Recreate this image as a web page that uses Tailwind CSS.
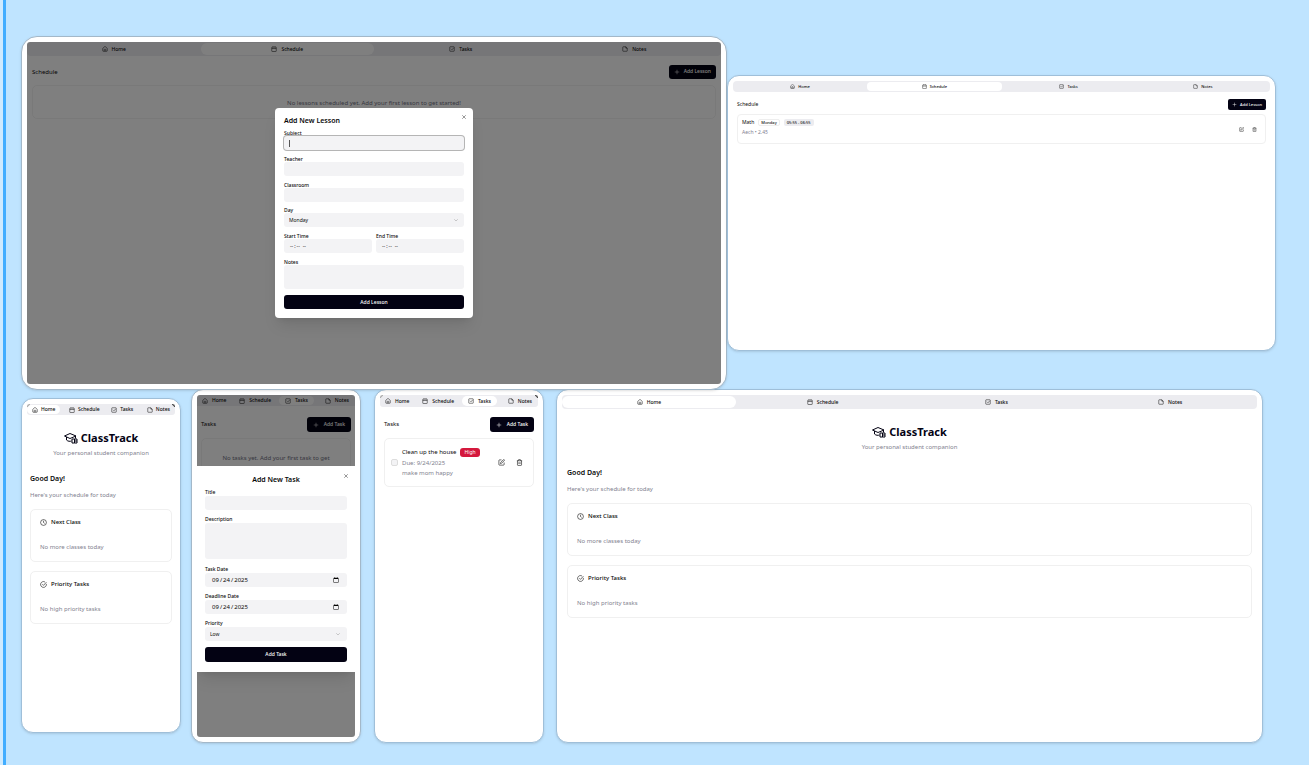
<!DOCTYPE html>
<html lang="en">
<head>
<meta charset="utf-8">
<meta name="viewport" content="width=device-width, initial-scale=1">
<title>ClassTrack</title>
<script src="https://cdn.jsdelivr.net/npm/@tailwindcss/browser@4"></script>
</head>
<body class="min-h-screen bg-[#bfe4ff] font-['Noto_Sans',sans-serif] text-[#0a0a0a]">
<svg class="hidden" aria-hidden="true">
  <symbol id="home" viewBox="0 0 24 24"><path d="M15 21v-7a1 1 0 0 0-1-1h-4a1 1 0 0 0-1 1v7"/><path d="M3 10a2 2 0 0 1 .7-1.5l7-6a2 2 0 0 1 2.6 0l7 6A2 2 0 0 1 21 10v9a2 2 0 0 1-2 2H5a2 2 0 0 1-2-2z"/></symbol>
  <symbol id="cal" viewBox="0 0 24 24"><path d="M8 2v4M16 2v4M3 10h18"/><rect x="3" y="4" width="18" height="18" rx="2"/></symbol>
  <symbol id="check" viewBox="0 0 24 24"><rect x="3" y="3" width="18" height="18" rx="2"/><path d="m8 11 4 4 7-8"/></symbol>
  <symbol id="note" viewBox="0 0 24 24"><path d="M15 3H5a2 2 0 0 0-2 2v14a2 2 0 0 0 2 2h14a2 2 0 0 0 2-2V9z"/><path d="M15 3v5a1 1 0 0 0 1 1h5"/></symbol>
  <symbol id="plus" viewBox="0 0 24 24"><path d="M3 12h18M12 3v18"/></symbol>
  <symbol id="x" viewBox="0 0 24 24"><path d="M19 5 5 19M5 5l14 14"/></symbol>
  <symbol id="down" viewBox="0 0 24 24"><path d="m5 9 7 7 7-7"/></symbol>
  <symbol id="edit" viewBox="0 0 24 24"><path d="M12 3H5a2 2 0 0 0-2 2v14a2 2 0 0 0 2 2h14a2 2 0 0 0 2-2v-7"/><path d="M18.4 2.6a1 1 0 0 1 3 3l-9 9-4 1 1-4z"/></symbol>
  <symbol id="trash" viewBox="0 0 24 24"><path d="M3 6h18M19 6v14a2 2 0 0 1-2 2H7a2 2 0 0 1-2-2V6M8 6V4a2 2 0 0 1 2-2h4a2 2 0 0 1 2 2v2M10 11v6M14 11v6"/></symbol>
  <symbol id="clock" viewBox="0 0 24 24"><circle cx="12" cy="12" r="10"/><path d="M12 6v6l4 3"/></symbol>
  <symbol id="done" viewBox="0 0 24 24"><path d="M21.8 10A10 10 0 1 1 17 3.3"/><path d="m8 11 4 4L22 4"/></symbol>
  <symbol id="logo" viewBox="0 0 28 24"><path d="M1 8 12 3l12 5-12 5z"/><path d="M5 10v6c3 3 7 3 10 2M23 8v5"/><path d="M16 14h5v8h-5zM21 14h5v8h-5M21 18h5"/></symbol>
</svg>

<main class="flex min-h-screen flex-col border-l-3 border-[#cfeafe]">
<div class="flex-1 border-l-3 border-[#42adff] pt-9 pl-[15px]">

<div class="relative z-10 flex items-start pr-[33px]">

<!-- Schedule: new lesson dialog -->
<section class="min-w-0 flex-[694] basis-0 rounded-2xl border border-[#a3b8c9] bg-white p-[5px] shadow-sm">
  <div class="relative min-h-[342px] overflow-hidden rounded-[3px] bg-white">
    <nav class="grid grid-cols-4 rounded-[4px] bg-[#ececf0] text-[5px] leading-[10px] font-medium">
      <button class="my-px flex items-center justify-center gap-1 rounded-md py-px"><svg class="size-[6px] fill-none stroke-current stroke-2"><use href="#home"/></svg>Home</button>
      <button class="my-px flex items-center justify-center gap-1 rounded-md bg-white py-px"><svg class="size-[6px] fill-none stroke-current stroke-2"><use href="#cal"/></svg>Schedule</button>
      <button class="my-px flex items-center justify-center gap-1 rounded-md py-px"><svg class="size-[6px] fill-none stroke-current stroke-2"><use href="#check"/></svg>Tasks</button>
      <button class="my-px flex items-center justify-center gap-1 rounded-md py-px"><svg class="size-[6px] fill-none stroke-current stroke-2"><use href="#note"/></svg>Notes</button>
    </nav>
    <div class="px-[5px] pt-[9px]">
      <div class="flex items-center justify-between">
        <h2 class="text-[6px] leading-[14px]">Schedule</h2>
        <button class="flex h-[14px] items-center gap-1 rounded-[3px] bg-[#030213] px-[5px] text-[5px] font-medium text-white"><svg class="size-[6px] fill-none stroke-current stroke-2"><use href="#plus"/></svg>Add Lesson</button>
      </div>
      <p class="mt-[6px] rounded-[5px] border border-black/5 py-[11px] pt-[13px] text-center text-[6px] leading-[8px] text-[#717182]">No lessons scheduled yet. Add your first lesson to get started!</p>
    </div>
    <div class="absolute inset-0 flex justify-center bg-black/50 pt-[66px]">
      <div role="dialog" aria-labelledby="lesson-title" class="relative mb-auto w-[198px] rounded-[4px] bg-white px-[9px] pt-[9px] pb-[9px] shadow-lg">
        <button aria-label="Close" class="absolute top-[6px] right-[6px]"><svg class="size-[6px] fill-none stroke-[#333] stroke-2"><use href="#x"/></svg></button>
        <h2 id="lesson-title" class="text-[7px] leading-[8px] font-semibold">Add New Lesson</h2>
        <form class="mt-[5px] flex min-h-[179px] flex-col justify-between text-[5px] leading-[6px] font-medium">
          <div class="relative flex flex-col"><label for="subject">Subject</label><input id="subject" class="h-[14px] rounded-[3px] bg-[#f3f3f5] px-[5px] font-normal ring-1 ring-[#b5b5b5] outline-none"><span class="absolute bottom-[3px] left-[5px] h-[7px] w-px bg-[#555]"></span></div>
          <div class="flex flex-col"><label for="teacher">Teacher</label><input id="teacher" class="h-[14px] rounded-[3px] bg-[#f3f3f5] px-[5px] font-normal"></div>
          <div class="flex flex-col"><label for="room">Classroom</label><input id="room" class="h-[14px] rounded-[3px] bg-[#f3f3f5] px-[5px] font-normal"></div>
          <div class="relative flex flex-col"><label for="day">Day</label><select id="day" class="h-[14px] appearance-none rounded-[3px] bg-[#f3f3f5] px-[5px] font-normal"><option>Monday</option></select><svg class="pointer-events-none absolute right-[5px] bottom-[4px] size-[6px] fill-none stroke-[#999] stroke-2"><use href="#down"/></svg></div>
          <div class="grid grid-cols-2 gap-[4px]">
            <div class="flex flex-col"><label for="start">Start Time</label><input id="start" type="time" class="h-[14px] rounded-[3px] bg-[#f3f3f5] px-[5px] font-normal [&::-webkit-calendar-picker-indicator]:hidden"></div>
            <div class="flex flex-col"><label for="end">End Time</label><input id="end" type="time" class="h-[14px] rounded-[3px] bg-[#f3f3f5] px-[5px] font-normal [&::-webkit-calendar-picker-indicator]:hidden"></div>
          </div>
          <div class="flex flex-col"><label for="lnotes">Notes</label><textarea id="lnotes" class="h-[24px] resize-none rounded-[3px] bg-[#f3f3f5] px-[5px] font-normal"></textarea></div>
          <button type="button" class="h-[14px] rounded-[3px] bg-[#030213] text-white">Add Lesson</button>
        </form>
      </div>
    </div>
  </div>
</section>

<!-- Schedule: lesson list -->
<section class="mt-[39px] min-h-[276px] min-w-0 flex-[537] basis-0 rounded-xl border border-[#9fbfd9] bg-white p-[5px] shadow-sm">
  <nav class="grid grid-cols-4 rounded-[4px] bg-[#ececf0] text-[4px] leading-[9px] font-medium">
    <button class="my-px flex items-center justify-center gap-[3px] rounded-[4px]"><svg class="size-[5px] fill-none stroke-current stroke-2"><use href="#home"/></svg>Home</button>
    <button class="my-px flex items-center justify-center gap-[3px] rounded-[4px] bg-white"><svg class="size-[5px] fill-none stroke-current stroke-2"><use href="#cal"/></svg>Schedule</button>
    <button class="my-px flex items-center justify-center gap-[3px] rounded-[4px]"><svg class="size-[5px] fill-none stroke-current stroke-2"><use href="#check"/></svg>Tasks</button>
    <button class="my-px flex items-center justify-center gap-[3px] rounded-[4px]"><svg class="size-[5px] fill-none stroke-current stroke-2"><use href="#note"/></svg>Notes</button>
  </nav>
  <div class="px-1 pt-[7px]">
    <div class="flex items-center justify-between">
      <h2 class="text-[5px] leading-[11px]">Schedule</h2>
      <button class="flex h-[11px] items-center gap-[3px] rounded-[2px] bg-[#030213] px-[4px] text-[4px] font-medium text-white"><svg class="size-[5px] fill-none stroke-current stroke-2"><use href="#plus"/></svg>Add Lesson</button>
    </div>
    <article class="mt-1 flex items-center justify-between rounded-[4px] border border-[#f0f0f0] py-[4px] pr-[8px] pl-[4px]">
      <div>
        <div class="flex items-center gap-[4px] text-[4px] leading-[7px] font-medium"><h3 class="text-[5px] font-normal">Math</h3><span class="rounded-[2px] border border-[#eee] px-[2px] leading-[5px]">Monday</span><span class="rounded-[2px] bg-[#ececf0] px-[3px]">05:55 - 06:55</span></div>
        <p class="mt-[3px] mb-[3px] text-[5px] leading-[7px] text-[#82828f]">Aech • 2.45</p>
      </div>
      <div class="flex gap-[8px]">
        <button aria-label="Edit lesson"><svg class="size-[5px] fill-none stroke-current stroke-2"><use href="#edit"/></svg></button>
        <button aria-label="Delete lesson"><svg class="size-[5px] fill-none stroke-current stroke-2"><use href="#trash"/></svg></button>
      </div>
    </article>
  </div>
</section>
</div>

<div class="-mt-px flex items-start pr-[46px]">

<!-- Home, narrow -->
<section class="mt-[9px] min-h-[335px] min-w-0 flex-[148] basis-0 rounded-xl border border-[#9fbfd9] bg-white p-[5px] shadow-sm">
  <nav class="relative flex justify-between rounded-[3px] bg-[#ececf0] text-[5px] leading-[9px] font-medium">
    <button class="my-px flex items-center gap-[3px] rounded-[5px] bg-white px-[5px]"><svg class="size-[6px] fill-none stroke-current stroke-2"><use href="#home"/></svg>Home</button>
    <button class="my-px flex items-center gap-[3px] px-[3px]"><svg class="size-[6px] fill-none stroke-current stroke-2"><use href="#cal"/></svg>Schedule</button>
    <button class="my-px flex items-center gap-[3px] px-[3px]"><svg class="size-[6px] fill-none stroke-current stroke-2"><use href="#check"/></svg>Tasks</button>
    <button class="my-px flex items-center gap-[3px] px-[5px]"><svg class="size-[6px] fill-none stroke-current stroke-2"><use href="#note"/></svg>Notes</button>
    <span class="absolute top-0 right-0 size-[3px] rounded-tr-[3px] border-t border-r border-[#444]"></span>
    <span class="absolute top-0 left-0 size-[3px] rounded-tl-[3px] border-t border-l border-[#aaa]"></span>
  </nav>
  <div class="px-[3px] pt-[15px]">
    <h1 class="flex items-center justify-center gap-[3px] text-[11px] leading-[16px] font-bold text-[#030213]"><svg class="h-[12px] w-[14px] fill-none stroke-current stroke-2"><use href="#logo"/></svg>ClassTrack</h1>
    <p class="mt-[3px] text-center text-[6px] leading-[8px] text-[#82828f]">Your personal student companion</p>
    <h2 class="mt-[17px] text-[7px] leading-[10px] font-semibold">Good Day!</h2>
    <p class="mt-[7px] text-[6px] leading-[8px] text-[#82828f]">Here's your schedule for today</p>
    <article class="mt-[10px] rounded-[5px] border border-[#f0f0f0] px-[9px] py-[8px]"><h3 class="flex items-center gap-[4px] text-[6px] leading-[8px] font-medium"><svg class="size-[7px] fill-none stroke-current stroke-2"><use href="#clock"/></svg>Next Class</h3><p class="mt-[17px] mb-[2px] text-[6px] leading-[8px] text-[#82828f]">No more classes today</p></article>
    <article class="mt-[9px] rounded-[5px] border border-[#f0f0f0] px-[9px] py-[8px]"><h3 class="flex items-center gap-[4px] text-[6px] leading-[8px] font-medium"><svg class="size-[7px] fill-none stroke-current stroke-2"><use href="#done"/></svg>Priority Tasks</h3><p class="mt-[17px] mb-[2px] text-[6px] leading-[8px] text-[#82828f]">No high priority tasks</p></article>
  </div>
</section>

<!-- Tasks: new task dialog -->
<section class="ml-[10px] min-w-0 flex-[158] basis-0 rounded-xl border border-[#a3b8c9] bg-white p-[5px] shadow-sm">
  <div class="relative min-h-[342px] overflow-hidden rounded-[3px] bg-white">
    <nav class="flex justify-between bg-[#ececf0] text-[5px] leading-[9px] font-medium">
      <button class="my-px flex items-center gap-[4px] px-[5px]"><svg class="size-[6px] fill-none stroke-current stroke-2"><use href="#home"/></svg>Home</button>
      <button class="my-px flex items-center gap-[4px] px-[3px]"><svg class="size-[6px] fill-none stroke-current stroke-2"><use href="#cal"/></svg>Schedule</button>
      <button class="my-px flex items-center gap-[4px] rounded-[5px] bg-white px-[6px]"><svg class="size-[6px] fill-none stroke-current stroke-2"><use href="#check"/></svg>Tasks</button>
      <button class="my-px flex items-center gap-[4px] px-[6px]"><svg class="size-[6px] fill-none stroke-current stroke-2"><use href="#note"/></svg>Notes</button>
    </nav>
    <div class="px-[4px] pt-[11px]">
      <div class="flex items-center justify-between"><h2 class="text-[6px] leading-[15px]">Tasks</h2><button class="flex h-[15px] items-center gap-[5px] rounded-[3px] bg-[#030213] px-[6px] text-[5px] font-medium text-white"><svg class="size-[6px] fill-none stroke-current stroke-2"><use href="#plus"/></svg>Add Task</button></div>
      <p class="mt-[6px] rounded-[5px] border border-black/5 px-4 pt-[14px] pb-4 text-center text-[6px] leading-[10px] text-[#717182]">No tasks yet. Add your first task to get started!</p>
    </div>
    <div class="absolute inset-0 flex items-start bg-black/50 pt-[71px]">
      <div role="dialog" aria-labelledby="task-title" class="relative w-full bg-white px-[8px] pt-[9px] pb-[10px] shadow-lg">
        <button aria-label="Close" class="absolute top-[7px] right-[6px]"><svg class="size-[6px] fill-none stroke-[#333] stroke-2"><use href="#x"/></svg></button>
        <h2 id="task-title" class="text-center text-[7px] leading-[9px] font-semibold">Add New Task</h2>
        <form class="mt-[5px] flex flex-col gap-[6px] text-[5px] leading-[7px] font-medium">
          <div class="flex flex-col"><label for="title">Title</label><input id="title" class="h-[14px] rounded-[3px] bg-[#f3f3f5] px-[6px] font-normal"></div>
          <div class="mb-px flex flex-col"><label for="desc">Description</label><textarea id="desc" class="h-[36px] resize-none rounded-[3px] bg-[#f3f3f5] px-[6px] font-normal"></textarea></div>
          <div class="flex flex-col"><label for="tdate">Task Date</label><input id="tdate" type="date" value="2025-09-24" class="h-[14px] rounded-[3px] bg-[#f3f3f5] px-[6px] text-[6px] font-normal"></div>
          <div class="flex flex-col"><label for="ddate">Deadline Date</label><input id="ddate" type="date" value="2025-09-24" class="h-[14px] rounded-[3px] bg-[#f3f3f5] px-[6px] text-[6px] font-normal"></div>
          <div class="relative flex flex-col"><label for="prio">Priority</label><select id="prio" class="h-[14px] appearance-none rounded-[3px] bg-[#f3f3f5] px-[5px] font-normal"><option>Low</option></select><svg class="pointer-events-none absolute right-[6px] bottom-[4px] size-[6px] fill-none stroke-[#999] stroke-2"><use href="#down"/></svg></div>
          <button type="button" class="h-[15px] rounded-[3px] bg-[#030213] text-[5px] text-white">Add Task</button>
        </form>
      </div>
    </div>
  </div>
</section>

<!-- Tasks: list -->
<section class="ml-[13px] min-h-[354px] min-w-0 flex-[158] basis-0 rounded-xl border border-[#9fbfd9] bg-white p-[5px] shadow-sm">
  <nav class="relative flex justify-between rounded-[3px] bg-[#ececf0] text-[5px] leading-[10px] font-medium">
    <button class="my-px flex items-center gap-[4px] px-[5px]"><svg class="size-[6px] fill-none stroke-current stroke-2"><use href="#home"/></svg>Home</button>
    <button class="my-px flex items-center gap-[4px] px-[3px]"><svg class="size-[6px] fill-none stroke-current stroke-2"><use href="#cal"/></svg>Schedule</button>
    <button class="my-px flex items-center gap-[4px] rounded-[5px] bg-white px-[6px]"><svg class="size-[6px] fill-none stroke-current stroke-2"><use href="#check"/></svg>Tasks</button>
    <button class="my-px flex items-center gap-[4px] px-[6px]"><svg class="size-[6px] fill-none stroke-current stroke-2"><use href="#note"/></svg>Notes</button>
    <span class="absolute top-0 right-0 size-[3px] rounded-tr-[3px] border-t border-r border-[#444]"></span>
    <span class="absolute top-0 left-0 size-[3px] rounded-tl-[3px] border-t border-l border-[#aaa]"></span>
  </nav>
  <div class="px-[4px] pt-[10px]">
    <div class="flex items-center justify-between"><h2 class="text-[6px] leading-[15px]">Tasks</h2><button class="flex h-[15px] items-center gap-[5px] rounded-[3px] bg-[#030213] px-[6px] text-[5px] font-medium text-white"><svg class="size-[6px] fill-none stroke-current stroke-2"><use href="#plus"/></svg>Add Task</button></div>
    <article class="mt-[6px] flex items-center rounded-[5px] border border-[#f0f0f0] px-[6px] pt-[7px] pb-[8px]">
      <input id="done1" type="checkbox" class="size-[7px] shrink-0 appearance-none rounded-[2px] border border-[#ddd] bg-[#f3f3f5]">
      <div class="ml-[4px] flex-1 text-[6px] leading-[10px] text-[#82828f]">
        <div class="flex items-center gap-[4px]"><label for="done1" class="text-[6px] leading-[12px] text-[#0a0a0a]">Clean up the house</label><span class="rounded-[3px] bg-[#d4183d] px-[4px] text-[5px] leading-[9px] text-white">High</span></div>
        <p>Due: 9/24/2025</p><p>make mom happy</p>
      </div>
      <div class="flex gap-[11px] pr-[4px]">
        <button aria-label="Edit task"><svg class="size-[7px] fill-none stroke-current stroke-2"><use href="#edit"/></svg></button>
        <button aria-label="Delete task"><svg class="size-[7px] fill-none stroke-current stroke-2"><use href="#trash"/></svg></button>
      </div>
    </article>
  </div>
</section>

<!-- Home, wide -->
<section class="ml-[12px] min-h-[354px] min-w-0 flex-[695] basis-0 rounded-xl border border-[#9fbfd9] bg-white p-[5px] shadow-sm">
  <nav class="grid grid-cols-4 rounded-[4px] bg-[#ececf0] text-[5px] leading-[10px] font-medium">
    <button class="my-px flex items-center justify-center gap-1 rounded-md bg-white py-px"><svg class="size-[6px] fill-none stroke-current stroke-2"><use href="#home"/></svg>Home</button>
    <button class="my-px flex items-center justify-center gap-1 rounded-md py-px"><svg class="size-[6px] fill-none stroke-current stroke-2"><use href="#cal"/></svg>Schedule</button>
    <button class="my-px flex items-center justify-center gap-1 rounded-md py-px"><svg class="size-[6px] fill-none stroke-current stroke-2"><use href="#check"/></svg>Tasks</button>
    <button class="my-px flex items-center justify-center gap-1 rounded-md py-px"><svg class="size-[6px] fill-none stroke-current stroke-2"><use href="#note"/></svg>Notes</button>
  </nav>
  <div class="px-[5px] pt-[15px]">
    <h1 class="flex items-center justify-center gap-[3px] text-[11px] leading-[16px] font-bold text-[#030213]"><svg class="h-[12px] w-[14px] fill-none stroke-current stroke-2"><use href="#logo"/></svg>ClassTrack</h1>
    <p class="mt-[3px] text-center text-[6px] leading-[8px] text-[#82828f]">Your personal student companion</p>
    <h2 class="mt-[17px] text-[7px] leading-[10px] font-semibold">Good Day!</h2>
    <p class="mt-[7px] text-[6px] leading-[8px] text-[#82828f]">Here's your schedule for today</p>
    <article class="mt-[10px] rounded-[5px] border border-[#f0f0f0] px-[9px] py-[8px]"><h3 class="flex items-center gap-[4px] text-[6px] leading-[8px] font-medium"><svg class="size-[7px] fill-none stroke-current stroke-2"><use href="#clock"/></svg>Next Class</h3><p class="mt-[17px] mb-[2px] text-[6px] leading-[8px] text-[#82828f]">No more classes today</p></article>
    <article class="mt-[9px] rounded-[5px] border border-[#f0f0f0] px-[9px] py-[8px]"><h3 class="flex items-center gap-[4px] text-[6px] leading-[8px] font-medium"><svg class="size-[7px] fill-none stroke-current stroke-2"><use href="#done"/></svg>Priority Tasks</h3><p class="mt-[17px] mb-[2px] text-[6px] leading-[8px] text-[#82828f]">No high priority tasks</p></article>
  </div>
</section>
</div>
</div>
</main>
</body>
</html>
